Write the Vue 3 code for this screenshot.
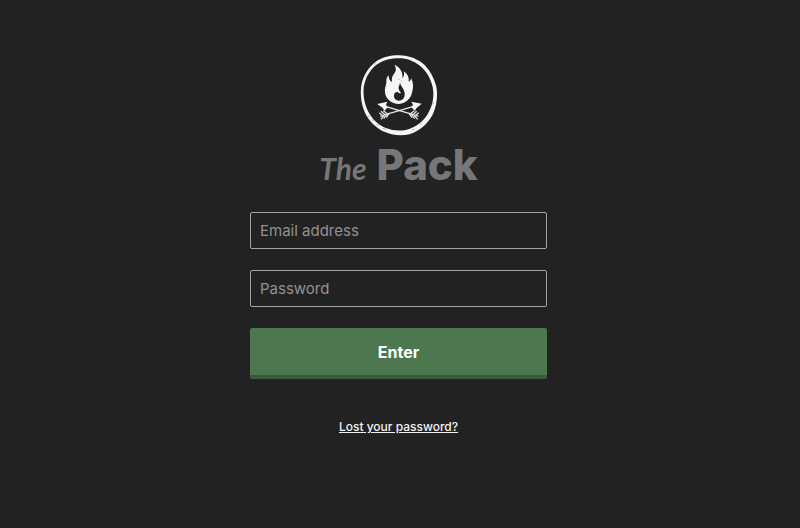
<template>
  <main class="login-page">
    <div class="login">
      <header class="brand">
        <svg class="logo" viewBox="30 18 234 246" aria-hidden="true">
          <!-- rough ring -->
          <path
            class="ink"
            fill-rule="evenodd"
            d="M137 22 C165 19 194 28 216 44 C238 62 252 88 259 116 C264 144 260 176 247 202 C232 229 208 250 178 259 C155 264 127 262 107 253 C80 242 57 220 45 194 C34 170 31 143 33 120 C36 91 49 66 70 47 C89 31 112 23 137 22 Z
            M140 31 C114 32 92 40 74 55 C56 71 45 94 41 119 C39 145 44 170 55 191 C67 214 85 230 107 240 C131 249 155 250 177 243 C203 234 224 217 236 193 C249 169 253 142 248 117 C242 91 229 69 208 52 C188 37 166 29 140 31 Z"
          />
          <path class="speck" d="M54 202 L58 207 M66 215 L71 218 M79 229 L86 233 M98 241 L107 244 M186 247 L193 243 M211 232 L217 226 M248 169 L250 162 M47 87 L50 83 M73 50 L78 46" />
          <!-- flame -->
          <path
            class="ink"
            d="M133 50 C150 58 160 72 157 91 C162 86 164 78 161 70 C172 77 178 88 176 101 C181 99 183 96 183 90 C191 106 190 118 187 130 C184 151 168 167 147 168 C124 168 107 153 105 133 C103 119 110 111 109 99 C109 92 111 87 116 82 C116 92 119 99 126 102 C124 92 127 84 133 76 C140 67 138 58 133 50 Z"
          />
          <path
            class="cut"
            d="M150 101 C150 114 163 120 164 136 C165 150 158 158 147 158 C137 158 131 151 132 142 C132 134 138 131 144 132 C146 136 150 137 153 134 C149 131 147 128 147 124 C143 118 150 112 150 101 Z"
          />
          <path class="speck" d="M145 93 L147 96 M155 97 L157 100" />
          <!-- crossed arrows -->
          <g class="shafts">
            <path d="M98 173 L190 200" />
            <path d="M199 173 L106 200" />
          </g>
          <path class="ink" d="M82 168 L112 161 L108 170 L113 178 L103 189 L99 181 Z" />
          <path class="ink" d="M215 167 L184 161 L189 170 L184 178 L195 189 L199 181 Z" />
          <g class="feathers">
            <path d="M112 197 L100 188 M117 196 L109 209 M105 200 L93 190 M109 200 L101 212 M98 203 L88 194 M101 203 L93 214" />
            <path d="M181 197 L193 188 M177 196 L186 209 M189 200 L200 190 M185 200 L194 212 M196 203 L206 194 M193 203 L203 214" />
            <path d="M118 196 L91 205 M177 196 L205 205" />
          </g>
        </svg>
        <h1 class="wordmark"><span class="the">The</span><span>Pack</span></h1>
      </header>

      <form class="form" @submit.prevent>
        <input v-model="email" type="email" placeholder="Email address" aria-label="Email address" />
        <input v-model="password" type="password" placeholder="Password" aria-label="Password" />
        <button type="submit">Enter</button>
      </form>

      <a class="lost" href="#">Lost your password?</a>
    </div>
  </main>
</template>

<script setup>
import { ref } from "vue";

const email = ref("");
const password = ref("");
</script>

<style>
body {
  margin: 0;
  background: #222222;
}
</style>

<style scoped>
.login-page {
  box-sizing: border-box;
  min-height: 100vh;
  padding: 54px 3px 24px 0;
  background: #222222;
  font-family: Inter, "Liberation Sans", sans-serif;
}

.login {
  display: flex;
  flex-direction: column;
  align-items: center;
  width: 100%;
  max-width: 297px;
  margin: 0 auto;
}

.brand {
  display: flex;
  flex-direction: column;
  align-items: center;
}

.logo {
  width: 78px;
  height: 82px;
}

.ink {
  fill: #f6f6f6;
}

.cut {
  fill: #222222;
}

.speck {
  fill: none;
  stroke: #8c8c8c;
  stroke-width: 2;
}

.shafts {
  fill: none;
  stroke: #e8e8e8;
  stroke-width: 4;
}

.feathers {
  fill: none;
  stroke: #e0e0e0;
  stroke-width: 4;
}

.wordmark {
  display: flex;
  align-items: baseline;
  gap: 10px;
  margin: 4px 0 0;
  color: #777777;
  font-size: 42px;
  font-weight: 800;
  line-height: 50px;
}

.the {
  font-family: Lato, "Liberation Sans", sans-serif;
  font-size: 30px;
  font-style: italic;
  font-weight: 700;
}

.form {
  display: flex;
  flex-direction: column;
  gap: 21px;
  width: 100%;
  margin-top: 19px;
}

input {
  box-sizing: border-box;
  width: 100%;
  height: 37px;
  padding: 0 9px;
  border: 1px solid #a6a6a6;
  border-radius: 2px;
  background: transparent;
  color: #ffffff;
  font-family: inherit;
  font-size: 15px;
}

input::placeholder {
  color: #929292;
  opacity: 1;
}

button {
  height: 51px;
  padding: 0;
  border: 0;
  border-bottom: 4px solid #3d593f;
  border-radius: 2px;
  background: #4d774e;
  color: #ffffff;
  font-family: inherit;
  font-size: 16px;
  font-weight: 700;
  cursor: pointer;
}

.lost {
  margin-top: 40px;
  color: #f2f2f2;
  font-size: 12px;
  font-weight: 500;
  line-height: 16px;
}
</style>
